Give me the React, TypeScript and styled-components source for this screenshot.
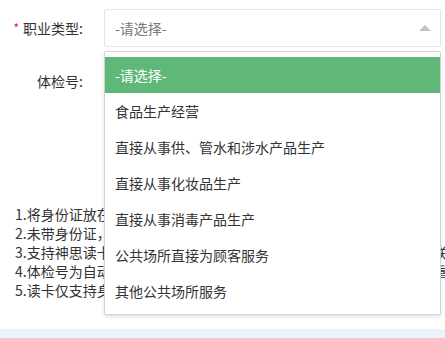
import styled, { createGlobalStyle } from 'styled-components'

const GlobalStyle = createGlobalStyle`
	html, body {
		margin: 0;
		padding: 0;
		background: #fff;
		overflow: hidden;
	}
	body {
		font-family: "Noto Sans CJK SC", "Liberation Sans", sans-serif;
		font-size: 14px;
		color: #333;
	}
`

const OPTIONS = [
	'-请选择-',
	'食品生产经营',
	'直接从事供、管水和涉水产品生产',
	'直接从事化妆品生产',
	'直接从事消毒产品生产',
	'公共场所直接为顾客服务',
	'其他公共场所服务',
];

const TIPS = [
	'1.将身份证放在读卡器上，点击读卡按钮',
	'2.未带身份证，可手动输入身份信息',
	'3.支持神思读卡器、华视读卡器、精伦读卡器，如使用其他读卡器请联系管理员获取驱动',
	'4.体检号为自动生成，如需修改请在体检登记页面中进行修改（不可重复）',
	'5.读卡仅支持身份证，其他证件请手动输入',
];

const Page = styled.div`
	width: 445px;
	height: 338px;
	display: flex;
	flex-direction: column;
	overflow: hidden;
`

const Form = styled.div`
	padding: 9px 4px 0 0;
	display: flex;
	flex-direction: column;
	gap: 15px;
`

const Row = styled.div`
	display: flex;
	align-items: center;
	height: 38px;
`

const Label = styled.label`
	width: 83px;
	flex-shrink: 0;
	text-align: right;
	padding-right: 21px;
	font-size: 14px;
	color: #333;
	white-space: nowrap;
`

const Required = styled.span`
	color: #e02020;
	font-size: 12px;
	margin-right: 4px;
	vertical-align: 1px;
`

const Field = styled.div`
	position: relative;
	flex: 1;
	height: 38px;
`

const SelectBox = styled.div`
	box-sizing: border-box;
	height: 38px;
	border: 1px solid #e6e6e6;
	border-radius: 2px;
	padding: 0 30px 0 10px;
	display: flex;
	align-items: center;
	color: #777;
	font-size: 14px;
	background: #fff;
`

const Arrow = styled.i`
	position: absolute;
	right: 10px;
	top: 16px;
	width: 0;
	height: 0;
	border-left: 6px solid transparent;
	border-right: 6px solid transparent;
	border-bottom: 6px solid #c2c2c2;
`

const TextInput = styled.div`
	box-sizing: border-box;
	height: 38px;
	border: 1px solid #e6e6e6;
	border-radius: 2px;
`

const Dropdown = styled.dl`
	position: absolute;
	left: 0;
	right: 0;
	top: 42px;
	margin: 0;
	padding: 5px 0;
	background: #fff;
	border: 1px solid #d2d2d2;
	border-radius: 2px;
	box-shadow: 0 2px 4px rgba(0, 0, 0, 0.12);
	z-index: 10;
`

const Option = styled.dd<{ $selected?: boolean }>`
	margin: 0;
	padding: 0 10px;
	height: 36px;
	line-height: 36px;
	font-size: 14px;
	white-space: nowrap;
	color: ${props => props.$selected ? '#fff' : '#333'};
	background: ${props => props.$selected ? '#5fb878' : 'transparent'};
`

const Tips = styled.div`
	margin-top: 105px;
	padding-left: 15px;
	font-size: 14px;
	line-height: 19px;
	color: #333;
`

const TipLine = styled.div`
	white-space: nowrap;
`

const Footer = styled.div`
	margin-top: auto;
	height: 9px;
	background: #e8f3fb;
	flex-shrink: 0;
`

const App = () => {
	return (
		<Page>
			<GlobalStyle />
			<Form>
				<Row>
					<Label><Required>*</Required>职业类型:</Label>
					<Field>
						<SelectBox>-请选择-</SelectBox>
						<Arrow />
						<Dropdown>
							{OPTIONS.map((option, i) => (
								<Option key={option} $selected={i === 0}>{option}</Option>
							))}
						</Dropdown>
					</Field>
				</Row>
				<Row>
					<Label>体检号:</Label>
					<Field>
						<TextInput />
					</Field>
				</Row>
			</Form>
			<Tips>
				{TIPS.map(tip => <TipLine key={tip}>{tip}</TipLine>)}
			</Tips>
			<Footer />
		</Page>
	)
}

export default App;
